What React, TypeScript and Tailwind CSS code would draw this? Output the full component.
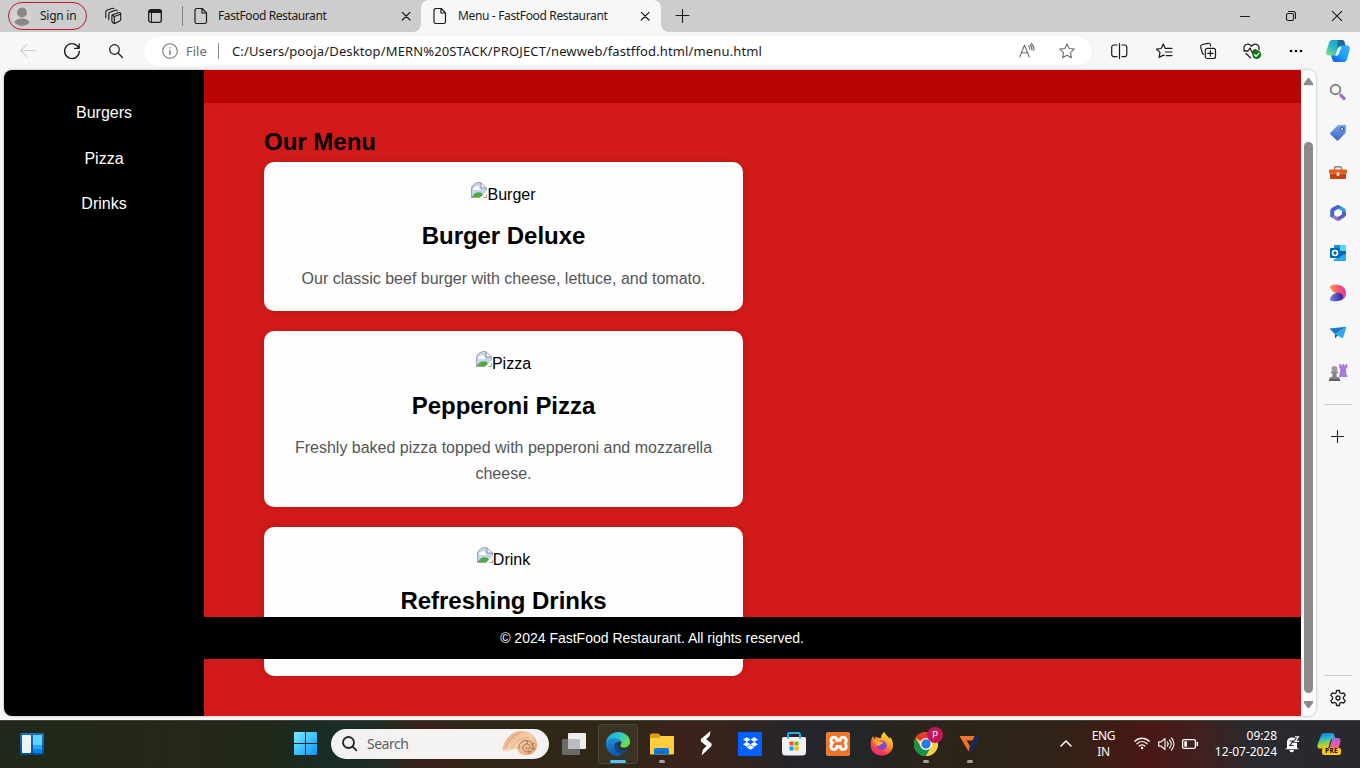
import React from "react";
import { SiDropbox, SiXampp } from "react-icons/si";

type SvgProps = { w: number; h: number; children: React.ReactNode; sw?: number; color?: string; className?: string };

function Line({ w, h, children, sw = 1.1, color = "#1b1b1b", className = "" }: SvgProps) {
  return (
    <svg width={w} height={h} viewBox={`0 0 ${w} ${h}`} fill="none" stroke={color} strokeWidth={sw} strokeLinecap="round" strokeLinejoin="round" className={`block shrink-0 overflow-visible ${className}`}>
      {children}
    </svg>
  );
}

function Art({ w, h, children, className = "" }: SvgProps) {
  return (
    <svg width={w} height={h} viewBox={`0 0 ${w} ${h}`} className={`block shrink-0 overflow-visible ${className}`}>
      {children}
    </svg>
  );
}

const DocIcon = () => (
  <Line w={14} h={18} sw={1.2}>
    <path d="M2.8 1.5h5.4l4.3 4.3v8.9a1.8 1.8 0 0 1-1.8 1.8H2.8A1.8 1.8 0 0 1 1 14.700V3.300a1.8 1.8 0 0 1 1.800-1.800zM8 1.700v4.300h4.300" />
  </Line>
);

const CloseIcon = () => (
  <Line w={10} h={10} sw={1.2}>
    <path d="M1.300 1.300l7.700 7.700M9 1.300L1.300 9" />
  </Line>
);

function TitleBar() {
  return (
    <div className="flex h-8 items-center bg-[#cdcdcd] pl-2 text-[12px] text-[#1b1b1b]">
      <div className="flex h-7 w-[79px] items-center rounded-full border border-[#b3202a] pl-[3px]">
        <Art w={20} h={20}>
          <defs><clipPath id="av"><circle cx="10" cy="10" r="10" /></clipPath></defs>
          <circle cx="10" cy="10" r="10" fill="#d6d3d0" />
          <g clipPath="url(#av)" fill="#8b8886"><circle cx="10" cy="6.500" r="5" /><ellipse cx="10" cy="16.500" rx="7.500" ry="4" /></g>
        </Art>
        <span className="ml-2 whitespace-nowrap tracking-[-0.25px]">Sign in</span>
      </div>
      <div className="flex w-[52px] justify-center">
        <Line w={18} h={18} sw={1.1}>
          <path d="M8.700 7.800l6.300-2.200c1-.3 1.700.2 1.700 1.200v5.400c0 .8-.3 1.300-1 1.700l-4.500 2.300c-.6.300-1 .3-1.600 0l-1-.8c-.5-.4-.7-.9-.7-1.500V8.800c0-.4.300-.8.800-1zM8 8.200l2.300 1.300v6.500M10.300 9.500l6.200-2.300" />
          <path d="M4.800 12.700V6.800c0-.8.4-1.300 1.100-1.600l5.600-2c.8-.3 1.500 0 1.800.5M1.800 10.700V4.900c0-.8.3-1.300 1-1.600l5-1.900c.8-.3 1.500-.1 2 .3" />
        </Line>
      </div>
      <div className="flex w-8 justify-center">
        <Line w={14} h={14} sw={1.3}>
          <rect x=".7" y=".7" width="12.600" height="12.600" rx="2.200" />
          <path d="M1.500 2.500h11" strokeWidth="2.800" /><path d="M3.500 4v9" strokeWidth="1" />
        </Line>
      </div>
      <div className="ml-[11px] h-5 w-px bg-[#858585]" />
      <div className="flex h-8 w-[238px] items-center pl-[11px]">
        <DocIcon />
        <span className="ml-[10px] w-[108px] whitespace-nowrap tracking-[-0.4px]">FastFood Restaurant</span>
        <div className="ml-auto mr-[10px]"><CloseIcon /></div>
      </div>
      <div className="relative flex h-8 w-[240px] items-center rounded-t-lg bg-[#f7f7f7] pl-[12px]">
        <Art w={8} h={8} className="absolute -left-2 bottom-0"><path d="M8 0v8H0a8 8 0 0 0 8-8z" fill="#f7f7f7" /></Art>
        <Art w={8} h={8} className="absolute -right-2 bottom-0"><path d="M0 0v8h8a8 8 0 0 1-8-8z" fill="#f7f7f7" /></Art>
        <DocIcon />
        <span className="ml-[11px] whitespace-nowrap tracking-[-0.35px]">Menu - FastFood Restaurant</span>
        <div className="ml-auto mr-[11px]"><CloseIcon /></div>
      </div>
      <div className="flex w-11 justify-center">
        <Line w={14} h={14} sw={1.1}><path d="M6.500.5v13M0 6.500h13" /></Line>
      </div>
      <div className="ml-auto flex">
        <div className="flex w-[46px] items-center justify-center"><Line w={10} h={10} sw={1}><path d="M.5 5.500h9" /></Line></div>
        <div className="flex w-[46px] items-center justify-center">
          <Line w={10} h={10} sw={1.1}><rect x=".5" y="2.500" width="7" height="7" rx="1.500" /><path d="M2.500.5H7A2.500 2.500 0 0 1 9.500 3v4.500" /></Line>
        </div>
        <div className="flex w-[46px] items-center justify-center"><Line w={10} h={10} sw={1.1}><path d="M.3.3l9.400 9.400M9.700.3L.3 9.700" /></Line></div>
      </div>
    </div>
  );
}

const STAR = "M8 .9l2.150 4.650 5.050.6-3.750 3.450 1 5.050L8 12.150l-4.450 2.500 1-5.050L.8 6.150l5.050-.6z";

function ToolBar() {
  return (
    <div className="flex h-[38px] items-center bg-[#f7f7f7] pl-[6px]">
      <div className="flex w-11 justify-center"><Line w={16} h={14} color="#cfcfcf"><path d="M15.500 6.500H.7M7 .3L.7 6.500 7 12.700" /></Line></div>
      <div className="flex w-11 justify-center">
        <Line w={16} h={16} sw={1.3}><path d="M14.800 5.200A7.400 7.400 0 1 0 15.400 8.300M15.200.8v4.500h-4.600" /></Line>
      </div>
      <div className="flex w-11 justify-center"><Line w={14} h={14} sw={1.2}><circle cx="5.500" cy="5.500" r="4.800" /><path d="M9 9l4.500 4.500" /></Line></div>
      <div className="ml-[6px] flex h-[30px] w-[948px] items-center rounded-full bg-white pl-[18px] shadow-[0_0_2px_rgba(0,0,0,0.08)]">
        <Line w={16} h={16} color="#767676"><circle cx="8" cy="8" r="7.300" /><path d="M8 7.500v4M8 4.700v.2" strokeWidth="1.300" /></Line>
        <span className="ml-2 w-8 pt-px text-[13px] text-[#6b6b6b]">File</span>
        <div className="h-4 w-px bg-[#8d8d8d]" />
        <span className="ml-[13px] whitespace-nowrap pt-px text-[13px] tracking-[0.135px] text-[#1b1b1b]">C:/Users/pooja/Desktop/MERN%20STACK/PROJECT/newweb/fastffod.html/menu.html</span>
        <div className="ml-auto mr-[17px] flex items-center gap-6">
          <Line w={16} h={16} color="#6e6e6e"><path d="M.7 14L5.500 2l4.800 12M2.400 9.800h6.200M9.500 3.200a3.500 3.500 0 0 1 1.200 3.300M10.900 1.800a5.500 5.500 0 0 1 2 5.300M12.200.5a8 8 0 0 1 2.700 7" /></Line>
          <Line w={16} h={16} color="#6e6e6e"><path d={STAR} /></Line>
        </div>
      </div>
      <div className="ml-[5px] flex">
        <div className="flex h-6 w-11 items-center justify-center">
          <Line w={16} h={16} sw={1.2}><path d="M6 2H3a2.300 2.300 0 0 0-2.300 2.300v7A2.300 2.300 0 0 0 3 13.700h3M11 2h2.500a2.300 2.300 0 0 1 2.300 2.300v7a2.300 2.300 0 0 1-2.300 2.400H11M8.500.5v15" /></Line>
        </div>
        <div className="flex h-6 w-[45px] items-center justify-center">
          <Line w={16} h={16} sw={1.2}><path d="M9.300 5.400L7.300 1 5.200 5.500l-4.700.6 3.500 3.300-.9 5 4.200-2.300.8.4M10.300 5.400H16M9.500 9H16M10.300 12.600H16" /></Line>
        </div>
        <div className="flex h-6 w-11 items-center justify-center">
          <Line w={16} h={16} sw={1.2}><rect x="5.300" y="5.300" width="10.200" height="10.200" rx="2" /><path d="M10.400 7.700v5.400M7.700 10.400h5.400M3.500 11.300A2 2 0 0 1 2.300 10L.7 4a2.200 2.200 0 0 1 1.500-2.500L8 .3a2 2 0 0 1 2.300 1.300l.3 1.200" /></Line>
        </div>
        <div className="flex h-6 w-11 items-center justify-center">
          <Line w={18} h={16} sw={1.3}>
            <path d="M1.200 7C-.2 3 2.800.7 5.500 1.200 7.300 1.500 8.200 2.900 8.500 3.200 9 2.600 10 1.200 12 1.100c3-.1 4.700 2.400 4 5.200M1 8h4l2-3 2.500 5 1.700-3h1.800M3 10.500l4.500 4.200" />
            <circle cx="13.700" cy="11.600" r="4.500" fill="#107c10" stroke="none" /><path d="M11.600 11.700l1.500 1.500 2.700-2.800" stroke="#fff" />
          </Line>
        </div>
        <div className="flex h-6 w-11 items-center justify-center"><Art w={14} h={4}><circle cx="2" cy="2" r="1.350" /><circle cx="7" cy="2" r="1.350" /><circle cx="12" cy="2" r="1.350" /></Art></div>
        <div className="flex h-6 w-10 items-center justify-center">
          <Art w={24} h={22}>
            <defs>
              <linearGradient id="ca" x1="0" y1="1" x2=".8" y2="0"><stop stopColor="#8ae276" /><stop offset=".5" stopColor="#23bbc5" /><stop offset="1" stopColor="#1493ce" /></linearGradient>
              <linearGradient id="cb" x1="0" y1="1" x2="1" y2="0"><stop stopColor="#184ed9" /><stop offset=".5" stopColor="#16a5f8" /><stop offset="1" stopColor="#4baaf4" /></linearGradient>
            </defs>
            <path d="M6 0h10c2 0 2.500 2 3 4l1 3h-5c-2 0-3 1-3.600 3l-1 3c-.8 2-2 2.500-4 2.500H3c-3 0-3.200-2.500-2.500-5L3 3c.6-2 1.500-3 3-3z" fill="url(#ca)" />
            <path d="M12 0h4c2 0 2.500 2 3 4l1 3h-5c-1.700 0-3 .8-3.600 3z" fill="#176aa0" />
            <path d="M18 22H9c-2 0-2.600-2-3-3.500l-1-3h1.500c2 0 3.500-.8 4-2.500l2-5.500C13.200 6 14 5.500 16 5.500h5c3 0 3.200 2.500 2.500 5L21 19c-.5 2-1.400 3-3 3z" fill="url(#cb)" />
            <path d="M11 10.500c.8-2.700 2-4 4.500-4l-2.500 7c-.8 2-2.200 2.300-4 2.300 1-1.200 1.300-3 2-5.300z" fill="#f4fafc" />
          </Art>
        </div>
      </div>
    </div>
  );
}

const BrokenImage = ({ id }: { id: string }) => (
  <Art w={16} h={16}>
    <defs>
      <clipPath id={id}><path d="M0 16V8a8 8 0 0 1 10-7.700L16 6v10z" /></clipPath>
    </defs>
    <g clipPath={`url(#${id})`}>
      <path d="M0 0h16v16H0z" fill="#c4d5f3" />
      <path d="M2 7c0-2 2-2 2.500-1.500C5.500 3 8.500 4 8 6.200c1.500.2 1.300 1.800 0 1.800H3C2 8 2 7 2 7z" fill="#fff" />
      <path d="M1 15c2-4 6-6 10-4l2 5H1z" fill="#4fa83a" />
      <path d="M17 8L8 16.500h4.500L17 13z" fill="#fff" />
      <path d="M10 .5V6h6" fill="#fff" stroke="#8c8c8c" />
      <path d="M.5 16V1M0 15.500h8M12.500 15.500H16M15.500 12.500v4" stroke="#a2a2a2" />
    </g>
    <path d="M.5 8A7.700 7.700 0 0 1 9.500.5L15.500 6v2" fill="none" stroke="#a6a6a6" />
  </Art>
);

type Item = { alt: string; name: string; text: string };
const items: Item[] = [
  { alt: "Burger", name: "Burger Deluxe", text: "Our classic beef burger with cheese, lettuce, and tomato." },
  { alt: "Pizza", name: "Pepperoni Pizza", text: "Freshly baked pizza topped with pepperoni and mozzarella cheese." },
  { alt: "Drink", name: "Refreshing Drinks", text: "" },
];
const cardHeights = ["h-[149px]", "h-[176px]", "h-[149px]"];
const titleGaps = ["mt-[15px]", "mt-[16px]", "mt-[15px]"];
const textGaps = ["mt-[15px]", "mt-[14px]", "mt-[15px]"];

function MenuCard({ item, index }: { item: Item; index: number }) {
  return (
    <div className={`flex w-[479px] flex-col items-center rounded-[10px] bg-[#fdfdfd] px-5 pt-5 text-center shadow-[0_0_10px_rgba(0,0,0,0.12)] ${cardHeights[index]}`}>
      <div className="flex h-6 text-[16px] leading-[25px] text-black">
        <BrokenImage id={`img-${item.alt}`} />
        <span>{item.alt}</span>
      </div>
      <h3 className={`text-[24px] font-bold leading-[30px] tracking-[-0.04px] text-black ${titleGaps[index]}`}>{item.name}</h3>
      {item.text && <p className={`text-[16px] leading-[26px] text-[#555] ${textGaps[index]}`}>{item.text}</p>}
    </div>
  );
}

function WebPage() {
  return (
    <div className="relative flex h-[646px] w-[1312px] overflow-hidden rounded-lg bg-[#fdfdfd] font-['Liberation_Sans',Arial,sans-serif] shadow-[0_0_3px_rgba(0,0,0,0.3)]">
      <nav className="z-10 flex w-[200px] flex-col items-center gap-[22px] bg-black pt-[31px] text-[16px] leading-6 text-white">
        <a>Burgers</a>
        <a>Pizza</a>
        <a className="-mt-px">Drinks</a>
      </nav>
      <main className="w-[1097px] bg-[#d31a1a]">
        <div className="h-[33px] bg-[#b90505]" />
        <div className="pl-[60px] pt-[24px]">
          <h2 className="text-[24px] font-bold leading-[30px] text-black">Our Menu</h2>
          <div className="mt-[5px] flex flex-col gap-5">
            {items.map((it, i) => <MenuCard key={it.alt} item={it} index={i} />)}
          </div>
        </div>
      </main>
      <div className="flex w-[15px] flex-col items-center pt-2">
        <Art w={11} h={8}><path d="M5.500 0c.5 0 1 .3 1.400 1l3.200 4.500c.6 1 .3 1.700-.8 1.700H1.700C.6 7.200.3 6.500.9 5.500L4.100 1c.4-.7.900-1 1.400-1z" fill="#8b8b8b" /></Art>
        <div className="mt-14 h-[551px] w-[9px] rounded-full bg-[#8b8b8b]" />
        <Art w={11} h={8} className="mt-[8px]"><path d="M5.500 7.200c.5 0 1-.3 1.400-1l3.200-4.500c.6-1 .3-1.700-.8-1.700H1.700C.6 0 .3.700.9 1.700l3.200 4.500c.4.7.900 1 1.400 1z" fill="#8b8b8b" /></Art>
      </div>
      <footer className="absolute left-0 top-[547px] flex h-[42px] w-[1297px] items-center justify-center bg-black text-[14px] text-white">
        <span className="whitespace-nowrap pr-px">© 2024 FastFood Restaurant. All rights reserved.</span>
      </footer>
    </div>
  );
}

const sideIcons = [
  <Art w={18} h={18}><circle cx="6.500" cy="5.500" r="4.800" fill="none" stroke="#858585" strokeWidth="1.900" /><path d="M12 11.500l3 3" stroke="#a06cd5" strokeWidth="3.200" strokeLinecap="round" /><path d="M10 9l1.500 1.500" stroke="#b9a5cf" strokeWidth="2" /></Art>,
  <Art w={18} h={18}><defs><linearGradient id="tg" x1="0" y1="0" x2="0" y2="1"><stop stopColor="#75a5ed" /><stop offset="1" stopColor="#3b64c4" /></linearGradient></defs><path d="M9.500 1.300l6-.5c.9 0 1.500.6 1.500 1.500l-.3 5.800c0 .6-.3 1-.7 1.500l-6.400 6.500c-.7.700-1.500.7-2.200 0L1.600 10.600c-.7-.7-.7-1.500 0-2.200L8 1.900c.4-.4.900-.6 1.500-.6z" fill="url(#tg)" /><circle cx="13" cy="5" r="1.500" fill="#fff" stroke="#25458d" /></Art>,
  <Art w={18} h={14}><path d="M5.500 4V2A1.200 1.200 0 0 1 6.700.8h4.600A1.200 1.200 0 0 1 12.500 2v2" fill="none" stroke="#858585" strokeWidth="1.500" /><rect x="0" y="3.500" width="18" height="4" rx="1" fill="#e8591c" /><path d="M1 7.500h16V12a1 1 0 0 1-1 1H2a1 1 0 0 1-1-1z" fill="#c8400e" /><rect x="7.500" y="6" width="3" height="4" rx="1.500" fill="#ddd" /></Art>,
  <Art w={18} h={18}>
    <path d="M9 .7l6.500 3.600c.8.5 1.300 1.200 1.300 2v5.500L13 9.300V7L8 4.200 5.500 5.600z" fill="#31a4dc" />
    <path d="M9 .7L4.600 3.100C2 4.500 1.200 5.200 1.200 7.500v5.200c2 1 4 .2 4-2V7.200L12 3.300z" fill="#4069c8" />
    <path d="M1.200 12.500l6.600 4.200c.8.500 1.600.5 2.400 0l5.600-3.400c1-.7 1-2.500 0-3.200L9.500 13.500 5 11c0 2-2 2.500-3.800 1.500z" fill="#a074c4" />
    <path d="M16.800 8v3.500L10 15.700l-2-2.500 5-3V7.500z" fill="#525bc7" /><path d="M9 5.800l3 1.700v3.400l-3 1.700-3-1.700V7.500z" fill="#fff" />
  </Art>,
  <Art w={18} h={18}><rect x="5" y="1" width="12" height="13" rx="1" fill="#1490df" /><path d="M11 1h6v6h-6z" fill="#50d9ff" /><path d="M11 7h6v5h-6z" fill="#0a64ad" /><path d="M4 16l13-6.500V16a1 1 0 0 1-1 1H5z" fill="#28a8ea" /><rect x="1" y="4" width="10" height="10" rx="1" fill="#0067b8" /><circle cx="6" cy="9" r="2.500" fill="none" stroke="#fff" strokeWidth="1.600" /></Art>,
  <Art w={18} h={18}>
    <defs><linearGradient id="d1"><stop stopColor="#ff9c46" /><stop offset=".5" stopColor="#ff536b" /><stop offset="1" stopColor="#d83ca7" /></linearGradient><linearGradient id="d2"><stop stopColor="#7c7bed" /><stop offset="1" stopColor="#2c248f" /></linearGradient></defs>
    <path d="M2 1.500C3.500.6 6 .8 8 .8c5.500 0 9 3.700 9 8.200 0 4-2 6.200-4.500 7.200L9 9.800C5.500 9 1.500 6 1 3.200c0-.8.300-1.300 1-1.700z" fill="url(#d1)" />
    <path d="M1 15.500C2 11 5.500 8.800 9 8.800c3 0 5 1.700 5 4 0 2.700-2.700 4.400-6.200 4.400-2.800 0-7 .3-6.800-1.700z" fill="url(#d2)" />
  </Art>,
  <Art w={18} h={14}><path d="M.5 2.500L17.500.7 6 8.200z" fill="#1679cc" /><path d="M17.500.7L6 8.200l6.800 3.600c.7.400 1.200.2 1.500-.6z" fill="#31a9e8" /><path d="M6 8.200v4l2.600-2.600z" fill="#064e91" /></Art>,
  <Art w={20} h={18}><path d="M11.500 0H13v1.500h1.500V0h1.700v1.500h1.500V0h1.500v3.500L18 5l.4 5.500 1 .8V13H11l.5-2.500L12.300 5l-1.200-1.500z" fill="#a97ad6" /><circle cx="6.500" cy="5" r="3" fill="#9b9b9b" /><path d="M3 7.500h7v2H8.300L8.900 13H10.500c1 .7 1.500 1.500 1.500 3.500H1c0-2 .5-2.800 1.500-3.500h1.600l.6-3.500H3z" fill="#858585" /><path d="M1 15h11v2H1z" fill="#606060" /></Art>,
];

function EdgeSidebar() {
  return (
    <aside className="flex h-[650px] w-11 flex-col items-center bg-[#f7f7f7] pt-[2px]">
      {sideIcons.map((ic, i) => <div key={i} className="flex h-10 w-full items-center justify-center pt-px">{ic}</div>)}
      <div className="mt-3 h-px w-7 bg-[#cbcbcb]" />
      <div className="mt-[25px]"><Line w={12} h={12}><path d="M5.500.500v12M-.5 6.500h12" /></Line></div>
      <div className="mb-[14px] mt-auto h-px w-7 bg-[#cbcbcb]" />
      <div className="mb-[14px]">
        <Line w={16} h={16} sw={1.300}><path d="M6.600.5h2.800l.5 2.300 1.500.9 2.300-.8 1.500 2.500-1.800 1.700v1.800l1.800 1.700-1.500 2.500-2.300-.8-1.500.9-.5 2.300H6.600l-.5-2.300-1.500-.9-2.300.8-1.500-2.500 1.800-1.700V7.100L.8 5.400l1.500-2.500 2.300.8 1.500-.9z" /><circle cx="8" cy="8" r="2" /></Line>
      </div>
    </aside>
  );
}

const Slot = ({ children, mark = false }: { children: React.ReactNode; mark?: boolean }) => (
  <div className="relative flex h-12 w-11 items-center justify-center">
    {children}
    {mark && <div className="absolute bottom-[5px] left-[19px] h-[3px] w-[6px] rounded-full bg-[#a4a19c]" />}
  </div>
);

function TaskBar() {
  return (
    <div className="flex h-12 items-center border-t border-[#45443c] bg-[linear-gradient(90deg,#20281d_0%,#202818_4%,#262719_12%,#20281a_20%,#182d28_25%,#222b24_28%,#3b211a_31%,#302718_35%,#302717_46%,#3b221b_50%,#38241c_53%,#25242a_58%,#23262a_62%,#2a241b_67%,#2b2518_72%,#332116_79%,#4a1714_84%,#41201e_88%,#2a292d_92%,#29292d_100%)] pb-[2px] pl-5 text-white">
      <Art w={24} h={22}>
        <defs>
          <linearGradient id="wb" x1="0" y1="0" x2="0" y2="1"><stop stopColor="#1672c6" /><stop offset="1" stopColor="#064d91" /></linearGradient>
          <linearGradient id="st" x1="0" y1="0" x2="1" y2="1"><stop stopColor="#7cedff" /><stop offset="1" stopColor="#0795ff" /></linearGradient>
        </defs>
        <rect width="24" height="22" rx="1.500" fill="url(#wb)" /><rect x="2" y="2" width="9" height="18" rx="1" fill="#f2f2f2" /><path d="M13 2h9v10h-9z" fill="#62d3ff" /><path d="M13 12h9v4h-9z" fill="#24a8fa" /><path d="M13 16h9v4h-9z" fill="#0685ed" />
      </Art>
      <Art w={23} h={23} className="ml-[250px]"><path d="M0 1a1 1 0 0 1 1-1h10v11H0zM12 0h10a1 1 0 0 1 1 1v10H12zM0 12h11v11H1a1 1 0 0 1-1-1zM12 12h11v10a1 1 0 0 1-1 1H12z" fill="url(#st)" /></Art>
      <div className="ml-[14px] flex h-[30px] w-[218px] items-center rounded-full bg-[#f3f2f1] pl-[11px]">
        <Line w={15} h={15} sw={1.800} color="#252525"><circle cx="6.500" cy="6.500" r="5.500" /><path d="M10.800 10.800l3.600 3.600" /></Line>
        <span className="ml-[10px] text-[14px] tracking-[-0.5px] text-[#5d5d5d]">Search</span>
        <Art w={36} h={25} className="ml-auto mr-[11px]">
          <defs><linearGradient id="sh" x1="0" y1="0" x2="1" y2="1"><stop stopColor="#e79b70" /><stop offset=".5" stopColor="#f6d1ae" /><stop offset="1" stopColor="#d58b5d" /></linearGradient></defs>
          <path d="M0 19C2 8 10 0 20 0c10 0 16 7 15 15-.7 6-6 9.500-12 9-4-.3-7-3-8-6-4-1-8 3-15 1z" fill="url(#sh)" />
          <path d="M3 17C7 9 12 4 18 2M10 17c4-7 9-10 17-11" stroke="#d88a64" strokeWidth=".6" fill="none" />
          <circle cx="25" cy="15.500" r="8" fill="#ecc194" opacity=".7" />
          <path d="M17 18c-1-5 3-9 8-8.500 5 .5 8 6 5.500 9.500-3 3-8 2.500-9.500-1-1-3 1.500-5 4-5s4 3 2 5c-2 .8-3.500-.8-2.500-2.200M25 9.500l.5 3.500M32 12l-3 2M33 18l-4-1M28 23l-1.500-3" stroke="#a2663f" strokeWidth=".9" fill="none" />
        </Art>
      </div>
      <div className="ml-[3px] flex">
        <Slot>
          <Art w={24} h={22}><rect x="0" y="6" width="18" height="16" rx="1" fill="#696969" /><path d="M7 0h16a1 1 0 0 1 1 1v14a1 1 0 0 1-1 1H6V1a1 1 0 0 1 1-1z" fill="#ededed" /><path d="M6 6h12v10H6z" fill="#bcbcbc" /></Art>
        </Slot>
        <div className="flex h-12 w-11 items-center justify-center">
          <div className="relative flex h-10 w-10 items-center justify-center rounded border border-white/10 bg-white/5">
            <Art w={24} h={24}>
              <defs>
                <linearGradient id="e1" x1="0" y1="0" x2="1" y2=".5"><stop stopColor="#199edc" /><stop offset=".55" stopColor="#2cc9cf" /><stop offset="1" stopColor="#68df50" /></linearGradient>
                <linearGradient id="e2" x1="0" y1="0" x2="0" y2="1"><stop stopColor="#1a91dc" /><stop offset="1" stopColor="#0d56ad" /></linearGradient>
              </defs>
              <path d="M0 12C0 5 5.500 0 12 0c7 0 12 4.500 12 9.500 0 4-3 6-6 6-3.500 0-4.300-1.600-3.300-2.700C17 10 14 7 10 7c-5 0-8.500 2.500-10 5z" fill="url(#e1)" />
              <path d="M0 12c1-4 4-6 8-6 3.500 0 6.500 2 7 4.500C12.500 9 9 10 8.700 14c-.3 4.500 4 7.700 8.300 7.200A12 12 0 0 1 12 24C5 24 0 18.500 0 12z" fill="url(#e2)" />
              <path d="M8.500 12.500C7 19 12 23 17 21.500c2.500-.7 4.500-2.500 5.500-4.500-4 2-11 2-11-4 0-1 .4-2 1-3-2 .3-3.500 1-4 2.500z" fill="#114a8b" />
            </Art>
            <div className="absolute bottom-0 left-[11px] h-[3px] w-4 rounded-full bg-[#4cc2ff]" />
          </div>
        </div>
        <Slot mark>
          <Art w={24} h={22}><path d="M0 2a1.500 1.500 0 0 1 1.500-1.500h7L11 3h12a1 1 0 0 1 1 1v6H0z" fill="#dfa00d" /><path d="M0 5h9l2-2h12a1 1 0 0 1 1 1v16.500a1 1 0 0 1-1 1H1a1 1 0 0 1-1-1z" fill="#ffcd3e" /><path d="M4 21.500V17a2 2 0 0 1 2-2h11a2 2 0 0 1 2 2v4.500z" fill="#1277d0" /><path d="M8 18.500h7v1H8z" fill="#07549b" /></Art>
        </Slot>
        <Slot><Art w={13} h={25}><path d="M10.500 0L1.500 7.500C.5 8.500.5 10 1.500 11L6.500 15 3 18.500 1.500 24.500 11 15.500c.9-.9.900-2.500 0-3.500L6.200 8.200 9.500 5z" fill="#fff" /></Art></Slot>
        <Slot><div className="flex h-6 w-6 items-center justify-center bg-[#0061ff]"><SiDropbox size={15} color="#fff" /></div></Slot>
        <Slot>
          <Art w={24} h={24}><path d="M1.500 5h21A1.500 1.500 0 0 1 24 6.500V20a3.500 3.500 0 0 1-3.500 3.500h-17A3.500 3.500 0 0 1 0 20V6.500A1.500 1.500 0 0 1 1.500 5z" fill="#f1f1f1" /><path d="M6 6.500V2.500A1.500 1.500 0 0 1 7.500 1h9A1.500 1.500 0 0 1 18 2.500v4" fill="none" stroke="#25aeea" strokeWidth="2" /><path d="M7.500 9.500h4v4h-4z" fill="#f25022" /><path d="M12.500 9.500h4v4h-4z" fill="#7fba00" /><path d="M7.500 14.500h4v4h-4z" fill="#00a4ef" /><path d="M12.500 14.500h4v4h-4z" fill="#ffb900" /></Art>
        </Slot>
        <Slot><div className="flex h-6 w-6 items-center justify-center overflow-hidden rounded-[3px] bg-white"><SiXampp size={25} color="#ee7427" className="shrink-0" /></div></Slot>
        <Slot>
          <Art w={24} h={24}>
            <defs><linearGradient id="ff" x1=".8" y1="0" x2=".2" y2="1"><stop stopColor="#fff04f" /><stop offset=".4" stopColor="#ff9d22" /><stop offset=".75" stopColor="#ff3b50" /><stop offset="1" stopColor="#e12b83" /></linearGradient></defs>
            <path d="M3 4l1.500 3L6 4.500C7 6 8.500 6 11 6c0-3 1.500-5 3.500-6 .3 3 4 4 5 7l.5-2c2 2 3 5 3 8 0 6-5 10.500-11.300 10.500C5 23.500.7 19 .7 13c0-4 .8-6.500 2.300-9z" fill="url(#ff)" />
            <path d="M6.500 12c1-3 4-4.500 8-2.500 3.500 2 3 8-2 8.500-3.500.3-6-2-6-6z" fill="#8247d8" /><path d="M4 8c2 0 4-.3 6 1.500 2 0 3 .5 3.500 1.500-1.500 1.500-3.500 1-4 2.500-1 1-3 0-4-1z" fill="#ffab2b" />
          </Art>
        </Slot>
        <Slot mark>
          <Art w={24} h={24}>
            <circle cx="12" cy="12" r="12" fill="#ffcd40" /><path d="M12 12L1.600 6A12 12 0 0 1 22.400 6z" fill="#e33b2e" /><path d="M1.600 6A12 12 0 0 0 12 24l5.200-9L12 12 6.800 15z" fill="#159447" /><path d="M12 6h10.400A12 12 0 0 1 12 24l5.200-9z" fill="#ffcd40" /><circle cx="12" cy="12" r="6" fill="#fff" /><circle cx="12" cy="12" r="4.700" fill="#287ae6" />
          </Art>
          <span className="absolute left-[23px] top-[7px] flex h-4 w-4 items-center justify-center rounded-full bg-[#c2185b] font-['Roboto',sans-serif] text-[9px] leading-4">P</span>
        </Slot>
        <Slot mark>
          <Art w={22} h={18}><path d="M15.500 1H21L14.500 15 12.500 17H9.500L13.500 6z" fill="#172a58" /><path d="M.5 1h15l-2 4.500H7.500L11 11l-1.500 5.500z" fill="#ef732b" /></Art>
        </Slot>
      </div>
      <div className="ml-auto flex items-center">
        <Line w={12} h={7} sw={1.500} color="#fff"><path d="M1 6l5-5 5 5" /></Line>
        <div className="ml-[16px] flex w-[31px] flex-col text-center text-[12px] leading-4 tracking-[-0.4px]"><span>ENG</span><span>IN</span></div>
        <Line w={16} h={13} sw={1.400} color="#eee" className="ml-[15px]"><path d="M.8 4.300C5 .2 11 .2 15.200 4.300M3 6.700c3-2.800 7-2.800 10 0M5.300 9c1.700-1.400 3.700-1.400 5.400 0" /><circle cx="8" cy="11" r="1.200" fill="#fff" stroke="none" /></Line>
        <Line w={16} h={14} sw={1.200} color="#eee" className="ml-2"><path d="M.7 4.800v4.400h2.500L7 12.500v-11L3.200 4.800zM9.300 5a3 3 0 0 1 0 4M11.500 3a5.500 5.500 0 0 1 0 8M13.500 1a8.500 8.500 0 0 1 0 12" /></Line>
        <Line w={16} h={10} sw={1.300} color="#fff" className="ml-2"><rect x=".6" y=".6" width="12.800" height="8.800" rx="1.500" /><path d="M15.300 3.500v3" strokeWidth="1.600" /><path d="M2.300 2.300h2.700v5.400H2.300z" fill="#fff" stroke="none" /></Line>
        <div className="ml-[13px] flex w-[66px] flex-col whitespace-nowrap text-right text-[12px] leading-4 tracking-[-0.05px]"><span>09:28</span><span className="self-end">12-07-2024</span></div>
        <Art w={15} h={16} className="ml-2">
          <path d="M2 11.500V6a4.500 4.500 0 0 1 4.500-4.500h1.500C10.500 1.500 12 3.500 12 6v5.500l1.500 1.700H.5z" fill="#fff" /><path d="M4.500 14h4.500a2.250 2.250 0 0 1-4.500 0z" fill="#fff" />
          <path d="M4.500 5h3.700L4.800 9.500h3.800" stroke="#29292d" fill="none" strokeWidth="1.200" /><path d="M9.800.7h4L10.200 5.300h4" stroke="#29292d" fill="none" strokeWidth="3" /><path d="M10 .8h3.500L10.200 5.300h3.800" stroke="#fff" fill="none" strokeWidth="1.200" />
        </Art>
        <div className="relative ml-[17px] mr-[19px]">
          <Art w={24} h={24}>
            <defs><linearGradient id="p1" x1="0" y1="0" x2=".2" y2="1"><stop stopColor="#186de0" /><stop offset=".4" stopColor="#20b6d2" /><stop offset=".75" stopColor="#9bd53d" /><stop offset="1" stopColor="#f4c51c" /></linearGradient><linearGradient id="p2" x1="0" y1="0" x2="0" y2="1"><stop stopColor="#ae60e9" /><stop offset=".6" stopColor="#ef5d9c" /><stop offset="1" stopColor="#fa8066" /></linearGradient></defs>
            <path d="M7 1h8c2 0 2.500 2 3 5-3 0-4 1-5 4l-1 4c-.5 2-2 2.500-4 2.500H3c-2.500 0-3-2-2.200-4.500L4 3.500C4.500 2 5.500 1 7 1z" fill="url(#p1)" />
            <path d="M17 6h4c2.500 0 3 1.500 2.300 4L21 18h-9l2.500-9C15 7 15.500 6 17 6z" fill="url(#p2)" />
          </Art>
          <span className="absolute left-[5px] top-[16px] flex h-[7px] w-[19px] items-center justify-center rounded-[2px] bg-[#ffc918] text-[6.500px] font-bold leading-none tracking-[0.3px] text-black">PRE</span>
        </div>
      </div>
    </div>
  );
}

export default function App() {
  return (
    <div className="h-[768px] w-[1360px] overflow-hidden bg-[#f7f7f7] font-['Noto_Sans','Open_Sans',sans-serif]">
      <TitleBar />
      <ToolBar />
      <div className="flex h-[650px] pl-1">
        <WebPage />
        <EdgeSidebar />
      </div>
      <TaskBar />
    </div>
  );
}
